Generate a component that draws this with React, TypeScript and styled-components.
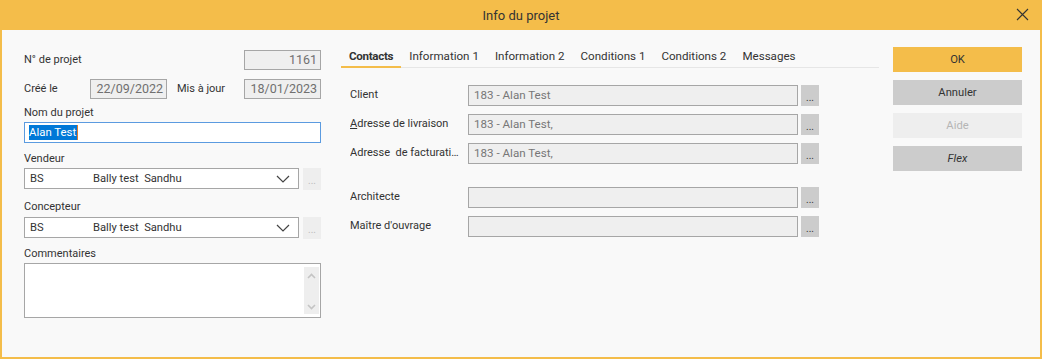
import React from 'react'
import styled, { createGlobalStyle } from 'styled-components'

const GlobalStyle = createGlobalStyle`
  body {
    margin: 0;
    background: #ffffff;
    font-family: Roboto, 'Liberation Sans', sans-serif;
    font-size: 11px;
    color: #333333;
  }
`

const ORANGE = '#F4BD4A'

const Window = styled.div`
  width: 1038px;
  height: 357px;
  border: 2px solid ${ORANGE};
  border-top: 0;
  background: #f9f9f9;
  display: flex;
  flex-direction: column;
`

const TitleBar = styled.div`
  height: 30px;
  background: ${ORANGE};
  display: flex;
  align-items: center;
  justify-content: center;
  position: relative;
  font-size: 13px;
  color: #333;
`

const CloseBtn = styled.div`
  position: absolute;
  right: 11px;
  top: 8px;
  width: 13px;
  height: 13px;
  display: flex;
`

const Body = styled.div`
  display: flex;
  padding: 17px 18px 0 22px;
`

const LeftCol = styled.div`
  width: 297px;
  display: flex;
  flex-direction: column;
  padding-top: 3px;
  margin-right: 20px;
`

const MidCol = styled.div`
  width: 538px;
  display: flex;
  flex-direction: column;
  margin-right: 14px;
`

const RightCol = styled.div`
  width: 129px;
  display: flex;
  flex-direction: column;
  gap: 8px;
`

const Row = styled.div<{ $mt?: number }>`
  display: flex;
  align-items: center;
  height: 20px;
  margin-top: ${(p) => p.$mt ?? 0}px;
`

const Label = styled.div<{ $w?: number; $pl?: number }>`
  width: ${(p) => (p.$w ? `${p.$w}px` : 'auto')};
  flex: ${(p) => (p.$w ? 'none' : '1')};
  padding-left: ${(p) => p.$pl ?? 0}px;
  padding-bottom: 2px;
  box-sizing: border-box;
  white-space: nowrap;
  color: #333;
`

const ReadBox = styled.div<{ $w: number }>`
  width: ${(p) => p.$w}px;
  height: 20px;
  box-sizing: border-box;
  border: 1px solid #a6a6a6;
  background: #efefef;
  color: #707070;
  font-size: 12.5px;
  text-align: right;
  padding: 0 3px;
  line-height: 18px;
`

const Group = styled.div<{ $mt: number }>`
  margin-top: ${(p) => p.$mt}px;
  display: flex;
  flex-direction: column;
`

const GroupLabel = styled.div<{ $mb?: number }>`
  height: 16px;
  line-height: 15px;
  margin-bottom: ${(p) => p.$mb ?? 1}px;
  color: #333;
`

const TextBox = styled.div`
  height: 21px;
  box-sizing: border-box;
  border: 1px solid #5b9be0;
  background: #fff;
  padding: 0 4px;
  display: flex;
  align-items: center;
`

const Selected = styled.span`
  background: #0078d7;
  color: #fff;
  font-size: 11.4px;
  line-height: 15px;
  padding-right: 1px;
  border-right: 1px solid #e07b2a;
`

const SelectRow = styled.div`
  display: flex;
  gap: 4px;
  height: 21px;
`

const Select = styled.div`
  flex: 1;
  box-sizing: border-box;
  border: 1px solid #a6a6a6;
  background: #fff;
  display: flex;
  align-items: center;
  padding: 0 0 0 5px;
  color: #333;
  font-size: 11.2px;
`

const Code = styled.span`
  width: 63px;
`

const Chevron = styled.svg`
  margin-left: auto;
  margin-right: 8px;
`

const DotsBtn = styled.div<{ $disabled?: boolean }>`
  width: 18px;
  height: ${(p) => (p.$disabled ? 22 : 21)}px;
  background: ${(p) => (p.$disabled ? '#eeeeee' : '#cccccc')};
  color: ${(p) => (p.$disabled ? '#bbbbbb' : '#333333')};
  font-size: 10px;
  display: flex;
  align-items: center;
  justify-content: center;
  padding-top: 3px;
  box-sizing: border-box;
  flex: none;
`

const TextArea = styled.div`
  height: 55px;
  box-sizing: border-box;
  border: 1px solid #a6a6a6;
  background: #fff;
  display: flex;
  justify-content: flex-end;
  padding: 3px 1px 3px 0;
`

const ScrollTrack = styled.div`
  width: 15px;
  background: #eeeeee;
  display: flex;
  flex-direction: column;
  justify-content: space-between;
  align-items: center;
  padding: 6px 0 4px;
`

const Tabs = styled.div`
  display: flex;
  height: 20px;
  border-bottom: 1px solid #e6e6e6;
`

const Tab = styled.div<{ $active?: boolean }>`
  padding: 0 8px;
  font-size: 11.6px;
  line-height: 19px;
  font-weight: ${(p) => (p.$active ? 700 : 400)};
  letter-spacing: ${(p) => (p.$active ? '-0.3px' : '0')};
  border-bottom: 2px solid ${(p) => (p.$active ? ORANGE : 'transparent')};
  margin-bottom: -1px;
  color: #333;
  white-space: nowrap;
`

const Contacts = styled.div`
  display: flex;
  flex-direction: column;
  gap: 8px;
  padding-left: 9px;
  margin-top: 17px;
`

const ContactRow = styled.div<{ $mt?: number }>`
  display: flex;
  align-items: center;
  height: 21px;
  margin-top: ${(p) => p.$mt ?? 0}px;
`

const ContactLabel = styled.div`
  width: 118px;
  white-space: nowrap;
  overflow: hidden;
  text-overflow: ellipsis;
  padding-right: 5px;
  padding-bottom: 2px;
  box-sizing: border-box;
`

const ContactBox = styled.div`
  width: 330px;
  height: 21px;
  box-sizing: border-box;
  border: 1px solid #a6a6a6;
  background: #efefef;
  color: #777;
  font-size: 11.6px;
  padding: 0 5px;
  line-height: 19px;
  margin-right: 3px;
`

const Button = styled.div<{ $kind?: 'primary' | 'normal' | 'disabled'; $italic?: boolean }>`
  height: 25px;
  display: flex;
  align-items: center;
  justify-content: center;
  font-size: 11.2px;
  background: ${(p) =>
    p.$kind === 'primary' ? ORANGE : p.$kind === 'disabled' ? '#eeeeee' : '#cccccc'};
  color: ${(p) => (p.$kind === 'disabled' ? '#b5b5b5' : '#333')};
  font-style: ${(p) => (p.$italic ? 'italic' : 'normal')};
`

const ChevronDown = () => (
  <Chevron width="14" height="8" viewBox="0 0 14 8">
    <polyline points="1,1 7,7 13,1" fill="none" stroke="#444" strokeWidth="1.2" />
  </Chevron>
)

const SmallArrow = ({ up }: { up?: boolean }) => (
  <svg width="9" height="6" viewBox="0 0 9 6">
    <polyline
      points={up ? '1,5 4.5,1.5 8,5' : '1,1 4.5,4.5 8,1'}
      fill="none"
      stroke="#c4c4c4"
      strokeWidth="1.6"
    />
  </svg>
)

const contacts = [
  { label: 'Client', value: '183 - Alan Test' },
  { label: 'Adresse de livraison', value: '183 - Alan Test,', underline: true },
  { label: 'Adresse\u00a0 de facturation', value: '183 - Alan Test,' },
]

const tabs = ['Contacts', 'Information 1', 'Information 2', 'Conditions 1', 'Conditions 2', 'Messages']

const App = () => (
  <>
    <GlobalStyle />
    <Window>
      <TitleBar>
        Info du projet
        <CloseBtn>
          <svg width="13" height="13" viewBox="0 0 13 13">
            <path d="M1 1 L12 12 M12 1 L1 12" stroke="#333" strokeWidth="1.1" />
          </svg>
        </CloseBtn>
      </TitleBar>
      <Body>
        <LeftCol>
          <Row>
            <Label>N° de projet</Label>
            <ReadBox $w={77}>1161</ReadBox>
          </Row>
          <Row $mt={9}>
            <Label $w={66}>Créé le</Label>
            <ReadBox $w={77}>22/09/2022</ReadBox>
            <Label $w={77} $pl={10}>
              Mis à jour
            </Label>
            <ReadBox $w={77}>18/01/2023</ReadBox>
          </Row>
          <Group $mt={6}>
            <GroupLabel>Nom du projet</GroupLabel>
            <TextBox>
              <Selected>Alan Test</Selected>
            </TextBox>
          </Group>
          <Group $mt={8}>
            <GroupLabel>Vendeur</GroupLabel>
            <SelectRow>
              <Select>
                <Code>BS</Code>
                Bally test&nbsp; Sandhu
                <ChevronDown />
              </Select>
              <DotsBtn $disabled>...</DotsBtn>
            </SelectRow>
          </Group>
          <Group $mt={10}>
            <GroupLabel $mb={2}>Concepteur</GroupLabel>
            <SelectRow>
              <Select>
                <Code>BS</Code>
                Bally test&nbsp; Sandhu
                <ChevronDown />
              </Select>
              <DotsBtn $disabled>...</DotsBtn>
            </SelectRow>
          </Group>
          <Group $mt={8}>
            <GroupLabel>Commentaires</GroupLabel>
            <TextArea>
              <ScrollTrack>
                <SmallArrow up />
                <SmallArrow />
              </ScrollTrack>
            </TextArea>
          </Group>
        </LeftCol>

        <MidCol>
          <Tabs>
            {tabs.map((t, i) => (
              <Tab key={t} $active={i === 0}>
                {t}
              </Tab>
            ))}
          </Tabs>
          <Contacts>
            {contacts.map((c) => (
              <ContactRow key={c.label}>
                <ContactLabel>
                  {c.underline ? (
                    <>
                      <u>A</u>
                      {c.label.slice(1)}
                    </>
                  ) : (
                    c.label
                  )}
                </ContactLabel>
                <ContactBox>{c.value}</ContactBox>
                <DotsBtn>...</DotsBtn>
              </ContactRow>
            ))}
            <ContactRow $mt={15}>
              <ContactLabel>Architecte</ContactLabel>
              <ContactBox />
              <DotsBtn>...</DotsBtn>
            </ContactRow>
            <ContactRow>
              <ContactLabel>Maître d'ouvrage</ContactLabel>
              <ContactBox />
              <DotsBtn>...</DotsBtn>
            </ContactRow>
          </Contacts>
        </MidCol>

        <RightCol>
          <Button $kind="primary">OK</Button>
          <Button>Annuler</Button>
          <Button $kind="disabled">Aide</Button>
          <Button $italic>Flex</Button>
        </RightCol>
      </Body>
    </Window>
  </>
)

export default App
